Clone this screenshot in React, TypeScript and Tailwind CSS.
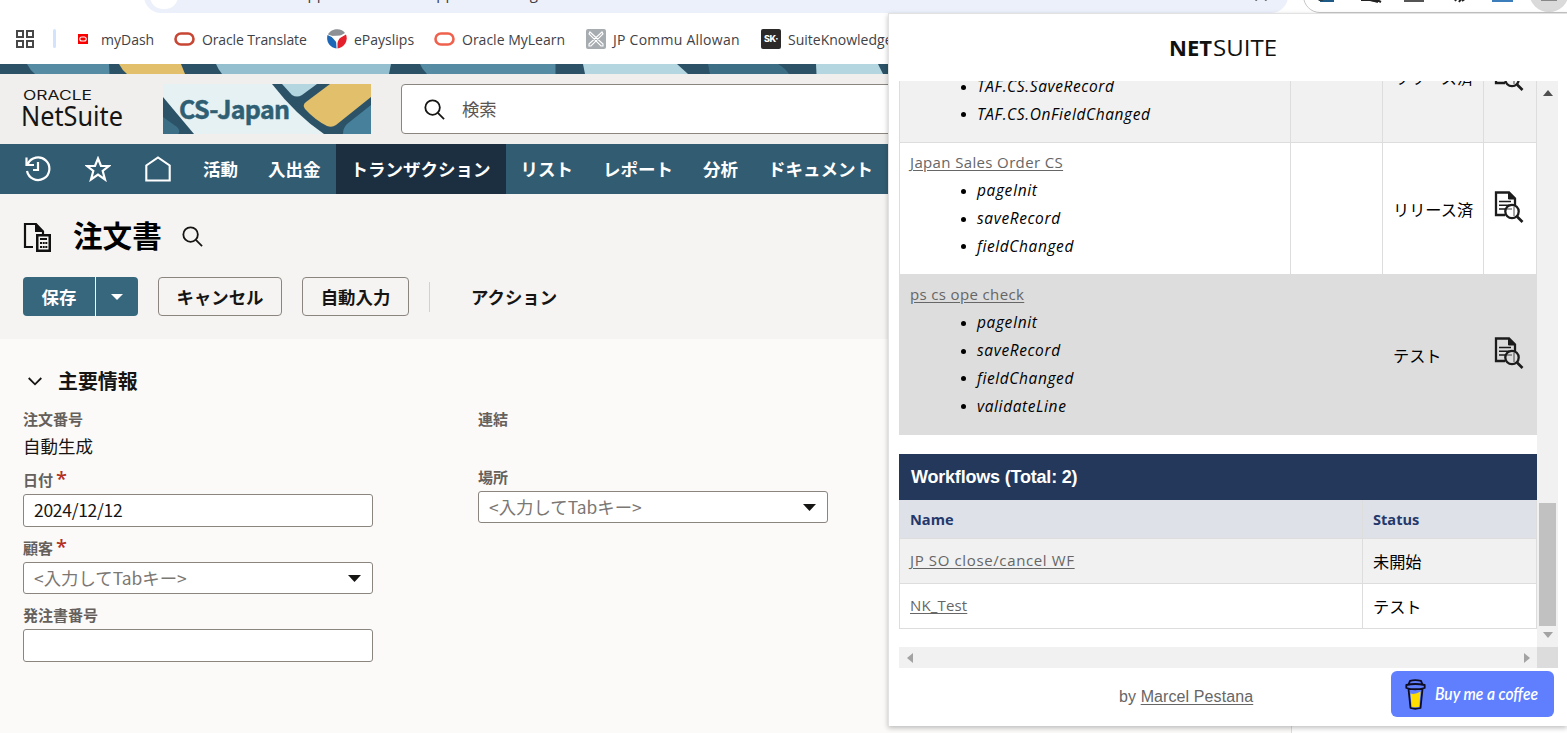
import React from "react";

interface Bookmark {
  label: string;
  icon: React.ReactNode;
  className: string;
}

interface ScriptRow {
  name: string;
  events: string[];
  status: string;
  className: string;
}

const OracleRing = ({ color }: { color: string }) => (
  <svg width="21" height="14" viewBox="0 0 21 14" className="shrink-0">
    <rect x="1.5" y="1.5" width="18" height="11" rx="5.5" fill="none" stroke={color} strokeWidth="2.6" />
  </svg>
);

const bookmarks: Bookmark[] = [
  {
    label: "myDash",
    className: "ml-[22px] gap-[13px] w-[76px]",
    icon: (
      <svg width="10" height="10" viewBox="0 0 10 10" className="shrink-0">
        <rect width="10" height="10" fill="#f80000" />
        <rect x="1.8" y="3" width="6.4" height="4" rx="2" fill="none" stroke="#fff" strokeWidth="1.1" />
      </svg>
    ),
  },
  {
    label: "Oracle Translate",
    className: "ml-[20px] gap-[7px] w-[133px] tracking-[-0.13px]",
    icon: <OracleRing color="#c74634" />,
  },
  {
    label: "ePayslips",
    className: "ml-[20px] gap-[7px] w-[87px]",
    icon: (
      <svg width="20" height="20" viewBox="0 0 20 20" className="shrink-0">
        <path d="M1 5.500C4 -1 15 -1.500 18 4L10 8.500Z" fill="#8d9094" />
        <path d="M0.500 6L9 10L9.500 19.500C2 18.500 -1 12 0.500 6Z" fill="#1c66b8" />
        <path d="M19 5.500C21.500 12 17 18.500 10.500 19.500V10.500Z" fill="#e3202b" />
        <path d="M4 7L14 6.500L10 14Z" fill="#fff" />
      </svg>
    ),
  },
  {
    label: "Oracle MyLearn",
    className: "ml-[20px] gap-[7px] w-[132px]",
    icon: <OracleRing color="#f0614d" />,
  },
  {
    label: "JP Commu Allowan",
    className: "ml-[20px] gap-[7px] w-[155px] tracking-[0.25px]",
    icon: (
      <svg width="20" height="20" viewBox="0 0 20 20" className="shrink-0">
        <rect width="20" height="20" rx="2" fill="#a7acb0" />
        <path d="M4 3L17 15V17H15L3 5ZM16 3L3 15V17H5L17 5Z" fill="none" stroke="#fff" strokeWidth="1.1" />
      </svg>
    ),
  },
  {
    label: "SuiteKnowledge",
    className: "ml-[20px] gap-[7px] w-[140px]",
    icon: (
      <span className="flex h-5 w-5 shrink-0 items-center justify-center rounded-[2px] bg-[#2b2a29] font-['Inter',sans-serif] text-[9px] font-extrabold tracking-[-0.4px] text-white">
        SK·
      </span>
    ),
  },
];

const navItems = ["活動", "入出金", "トランザクション", "リスト", "レポート", "分析", "ドキュメント"];

const scripts: ScriptRow[] = [
  {
    name: "TAF Localization CS",
    events: ["TAF.CS.PageInit", "TAF.CS.SaveRecord", "TAF.CS.OnFieldChanged"],
    status: "リリース済",
    className: "h-[132px] bg-[#f1f1f1]",
  },
  {
    name: "Japan Sales Order CS",
    events: ["pageInit", "saveRecord", "fieldChanged"],
    status: "リリース済",
    className: "h-[132px] bg-white",
  },
  {
    name: "ps cs ope check",
    events: ["pageInit", "saveRecord", "fieldChanged", "validateLine"],
    status: "テスト",
    className: "h-[160px] bg-[#dddddd]",
  },
];

const workflows = [
  { name: "JP SO close/cancel WF", status: "未開始", className: "bg-[#f1f1f1] tracking-[0.63px]" },
  { name: "NK_Test", status: "テスト", className: "bg-white tracking-[0.15px]" },
];

const SearchIcon = ({ size }: { size: number }) => (
  <svg width={size} height={size} viewBox="0 0 22 22" fill="none" stroke="#161513" strokeWidth="1.9">
    <circle cx="9" cy="9" r="7.6" />
    <path d="M14.5 14.5L21 21" />
  </svg>
);

const DocSearchIcon = () => (
  <svg width="30" height="32" viewBox="0 0 30 32" fill="none" stroke="#1c1c1c">
    <path d="M11 24H2V1.5H15L21 7.5V14" strokeWidth="2.3" />
    <path d="M14.5 1.5V8H21Z" fill="#1c1c1c" strokeWidth="1" />
    <path d="M5 10.5H17M5 14.2H15M5 18H12" strokeWidth="1.5" />
    <circle cx="18" cy="20.5" r="6.7" strokeWidth="2.3" />
    <path d="M12.5 18H18M20 16V25" strokeWidth="0.8" />
    <path d="M23 25.5L28.5 31" strokeWidth="2.6" />
  </svg>
);

const BrowserBar = () => (
  <div className="h-16 bg-white">
    <div className="flex h-[13px] items-end overflow-hidden">
      <div className="ml-[144px] flex h-[34px] w-[1144px] shrink-0 items-center rounded-full bg-[#ecf0fa]">
        <span className="ml-[6px] h-[26px] w-[28px] rounded-full bg-white" />
        <span className="relative top-[-3px] ml-[121px] whitespace-pre font-['Open_Sans',sans-serif] text-[15px] tracking-[0.1px] text-[#3c4043]">
          app.netsuite.com/app/accounting/transactions/
        </span>
        <svg width="14" height="14" viewBox="0 0 14 14" className="relative top-[-2px] ml-auto mr-[20px]">
          <path d="M1.5 13.5L7 10L12.5 13.5" stroke="#444" fill="none" strokeWidth="1.4" />
        </svg>
      </div>
      <div className="ml-[15px] flex h-[34px] w-[300px] shrink-0 items-end rounded-l-full border border-[#c6c6c6] pb-[9px] pl-[11px]">
        <svg width="260" height="34" viewBox="0 0 260 34" className="relative top-[9px] shrink-0">
          <circle cx="234" cy="14" r="20" fill="#dadada" />
          <path d="M5 18H19V24H5Z" fill="#1d5a86" />
          <path d="M0 18H8V23H4Z" fill="#2c3f4d" />
          <path d="M46 22H56L63 24M58 20L66 24" stroke="#222" strokeWidth="2" />
          <path d="M89 18H109V24H89Z" fill="#555" />
          <path d="M138 18L141 23M144 24L148 18M147 23L151 20" stroke="#222" strokeWidth="2" />
          <path d="M178 18V23H197V18" fill="#fff" stroke="#3c7dbb" strokeWidth="2" />
          <path d="M226 22H242" stroke="#888" strokeWidth="2" />
        </svg>
      </div>
    </div>
    <div className="flex h-[51px] items-center overflow-hidden whitespace-nowrap font-['Open_Sans',sans-serif] text-[14px] text-[#3f4246]">
      <svg width="18" height="18" viewBox="0 0 18 18" className="ml-4 shrink-0" fill="none" stroke="#474747" strokeWidth="2">
        <path d="M1 1H7V7H1ZM11 1H17V7H11ZM1 11H7V17H1ZM11 11H17V17H11Z" />
      </svg>
      <span className="ml-[19px] h-[19px] w-[3px] shrink-0 rounded bg-[#d3e3fd]" />
      {bookmarks.map((b) => (
        <div key={b.label} className={`flex shrink-0 items-center ${b.className}`}>
          {b.icon}
          <span className="pt-[2px]">{b.label}</span>
        </div>
      ))}
    </div>
  </div>
);

const BannerStrip = () => (
  <svg width="1567" height="10" viewBox="0 0 1567 10" className="block">
    <rect width="1567" height="10" fill="#2b5266" />
    <path d="M27 0H109L109.500 10H35Q30 6 27 0Z" fill="#558ca3" />
    <path d="M119 0H181L185 10H127Q122 6 119 0Z" fill="#e2bf6b" />
    <path d="M216 0H391L389 10H222Q218 5 216 0Z" fill="#94bfcf" />
    <path d="M420 0H555.500V10H427Q422 5 420 0Z" fill="#558ca3" />
    <path d="M583 0H677L688 10H585Z" fill="#b4d6e1" />
    <path d="M708 0H778Q785 4 789 10H710Z" fill="#3c6f86" />
    <path d="M816 0H878L883 10H816.500Z" fill="#b4d6e1" />
  </svg>
);

const Header = () => (
  <div className="flex h-[70px] items-center bg-[#f0efed]">
    <svg width="101" height="42" viewBox="0 0 101 42" className="ml-[22px]" fill="#161513">
      <text x="1" y="12" fontFamily="Inter, sans-serif" fontSize="12.5" textLength="69" lengthAdjust="spacingAndGlyphs">
        ORACLE
      </text>
      <text x="-1" y="38" fontFamily="Noto Sans, sans-serif" fontSize="28" textLength="102" lengthAdjust="spacingAndGlyphs">
        NetSuite
      </text>
    </svg>
    <svg width="208" height="50" viewBox="0 0 208 50" className="ml-10">
      <rect width="208" height="50" fill="#e6f1f4" />
      <path d="M0 13L31 50H0Z" fill="#2b5266" />
      <path d="M0 33L14 43Q17 46 16 49L15 50H0Z" fill="#3c6f86" />
      <path d="M109 0H208V50H161Q133 31 109 0Z" fill="#2b5266" />
      <path d="M119 0H154L139 11Q134 14 129 11Z" fill="#b4d6e1" />
      <path d="M167 0H208V13L173 41Q169 44 164 42Q152 36 142 25Q139 21 143 18Z" fill="#e2bf6b" />
      <path d="M208 21L184 40Q180 44 180 50H208Z" fill="#47809a" />
      <text
        x="16"
        y="35"
        fill="#2f5f73"
        stroke="#2f5f73"
        strokeWidth="0.5"
        fontFamily="Noto Sans CJK JP, sans-serif"
        fontWeight="700"
        fontSize="25"
        textLength="111"
      >
        CS-Japan
      </text>
    </svg>
    <div className="ml-[30px] flex h-[50px] w-[900px] items-center rounded border border-[#8b8580] bg-white pl-[22px]">
      <SearchIcon size={21} />
      <span className="ml-[17px] text-[17.3px] text-[#5b5652]">検索</span>
    </div>
  </div>
);

const NavBar = () => (
  <nav className="flex h-[50px] items-center bg-[#325c72] text-[17.5px] font-bold text-white">
    <svg width="26" height="26" viewBox="0 0 26 26" className="ml-[25px]" fill="none" stroke="#fff" strokeWidth="2.2">
      <path d="M2.800 8A11.300 11.300 0 1 1 2 15M1.500 1.500V9H9M13 6V14H8" />
    </svg>
    <svg width="26" height="26" viewBox="0 0 26 26" className="ml-[34px]" fill="none" stroke="#fff" strokeWidth="2.2">
      <path d="M13 2.500L16 10H24L17.700 15L20 23.500L13 18.500L6 23.500L8.300 15L2 10H10Z" />
    </svg>
    <svg width="26" height="26" viewBox="0 0 26 26" className="ml-[34px] mr-[17px]" fill="none" stroke="#fff" strokeWidth="2.100">
      <path d="M1.300 24.500V9.500L13 1.500L24.700 9.500V24.500Z" />
    </svg>
    {navItems.map((item) => (
      <div
        key={item}
        className={`flex h-full shrink-0 items-center px-[15px] ${item === "トランザクション" ? "bg-[#1c2f40]" : ""}`}
      >
        {item}
      </div>
    ))}
  </nav>
);

const TitleArea = () => (
  <div className="h-[145px] bg-[#f5f4f2] px-[23px] pt-[21px]">
    <div className="flex h-[42px] items-center">
      <svg width="28" height="30" viewBox="0 0 28 30" className="mt-[2px]">
        <path d="M10 25H2V2H13L20 9.500V12" fill="none" stroke="#111" strokeWidth="2.200" />
        <path d="M12 1V10H21" fill="#111" />
        <path d="M13 12H28V30H13Z" fill="#111" />
        <path d="M15.500 14.500H25.500V27.500H15.500Z" fill="#f5f4f2" />
        <path d="M17 16H24V18H17ZM17 20H19V22H17ZM19.700 20H21.700V22H19.700ZM22.300 20H24.300V22H22.300ZM17 24H19V26H17ZM19.700 24H21.700V26H19.700ZM22.300 24H24.300V26H22.300Z" fill="#111" />
      </svg>
      <h1 className="mb-[3px] ml-[22px] text-[29.6px] font-bold leading-[42px] text-black">注文書</h1>
      <span className="ml-5">
        <SearchIcon size={21} />
      </span>
    </div>
    <div className="mt-[20px] flex h-[39px] text-[17.4px] font-bold text-[#161513]">
      <button className="w-[72px] rounded-l bg-[#36677d] pt-[2px] text-white">保存</button>
      <button className="ml-px flex w-[42px] items-center justify-center rounded-r bg-[#36677d]">
        <svg width="12" height="6" viewBox="0 0 12 6">
          <path d="M0 0H12L6 6Z" fill="#fff" />
        </svg>
      </button>
      <button className="ml-5 w-[124px] rounded border border-[#8b8580] pt-[2px]">キャンセル</button>
      <button className="ml-5 w-[107px] rounded border border-[#8b8580] pt-[2px]">自動入力</button>
      <span className="ml-5 mt-[5px] h-[30px] w-px bg-[#d4d1cd]" />
      <button className="ml-[41px] pt-[2px]">アクション</button>
    </div>
  </div>
);

const Label = ({ text, required }: { text: string; required?: boolean }) => (
  <div className="flex h-[22px] items-center text-[15px] font-bold text-[#65605b]">
    {text}
    {required && (
      <span className="relative top-[-1px] ml-[3px] font-['Open_Sans',sans-serif] text-[20px] font-semibold leading-[22px] text-[#b3311f]">
        *
      </span>
    )}
  </div>
);

const SelectBox = () => (
  <div className="flex h-8 w-[350px] items-center justify-between rounded-[3px] border border-[#8b8580] bg-white pl-2.5 pr-[11px] text-[17.4px] text-[#7b7773]">
    <span>{"<入力してTabキー>"}</span>
    <svg width="13" height="7" viewBox="0 0 13 7">
      <path d="M0 0H13L6.500 7Z" fill="#161513" />
    </svg>
  </div>
);

const FormArea = () => (
  <div className="h-[394px] bg-[#fbfaf9] px-[23px] pt-[28px]">
    <div className="flex h-[28px] items-center">
      <svg width="14" height="9" viewBox="0 0 14 9" className="ml-[5px] mt-px" fill="none" stroke="#161513" strokeWidth="1.800">
        <path d="M0.700 1L7 7.300L13.300 1" />
      </svg>
      <h2 className="ml-[16px] text-[19.9px] font-bold leading-[28px] text-[#161513]">主要情報</h2>
    </div>
    <div className="flex gap-[105px]">
      <div className="w-[350px] pt-[13px]">
        <Label text="注文番号" />
        <div className="mt-[3px] h-[26px] text-[17.5px] leading-[26px] text-[#161513]">自動生成</div>
        <div className="mt-[10px]">
          <Label text="日付" required />
        </div>
        <div className="mt-[3px] flex h-[33px] items-center rounded-[3px] border border-[#8b8580] bg-white pl-2.5 text-[17.5px] tracking-[-0.3px] text-[#161513]">
          2024/12/12
        </div>
        <div className="mt-[10px] mb-[3px]">
          <Label text="顧客" required />
        </div>
        <SelectBox />
        <div className="mt-[10px] mb-[3px]">
          <Label text="発注書番号" />
        </div>
        <div className="h-[33px] rounded-[3px] border border-[#8b8580] bg-white" />
      </div>
      <div className="w-[350px] pt-[13px]">
        <Label text="連結" />
        <div className="mt-[36px] mb-[3px]">
          <Label text="場所" />
        </div>
        <SelectBox />
      </div>
    </div>
  </div>
);

const ScriptTableRow = ({ row }: { row: ScriptRow }) => (
  <div className={`grid shrink-0 grid-cols-[391px_92px_101px_54px] border-b border-[#dddddd] ${row.className}`}>
    <div className="border-l border-[#dddddd] pl-2.5 pt-[6px] leading-[27.9px]">
      <a className="tracking-[0.36px] text-[#666666] underline underline-offset-2">{row.name}</a>
      <ul className="list-none pl-[51px] pt-[0.3px] text-[15.5px] italic tracking-[0.6px] text-black">
        {row.events.map((event) => (
          <li key={event} className="flex items-center">
            <span className="mr-[11px] h-[5px] w-[5px] rounded-full bg-black" />
            {event}
          </li>
        ))}
      </ul>
    </div>
    <div className="border-l border-[#dddddd]" />
    <div className="flex items-center border-l border-[#dddddd] pl-2.5 pt-[2px] font-['Noto_Sans_CJK_JP',sans-serif] text-[16.2px] text-black">
      {row.status}
    </div>
    <div className="flex items-center border-x border-[#dddddd] pb-[4px] pl-[10px]">
      <DocSearchIcon />
    </div>
  </div>
);

const ScriptPanel = () => (
  <div className="absolute left-[888px] top-[13px] flex h-[713px] w-[679px] flex-col border-l border-t border-[#e2e2e2] bg-white shadow-[0_2px_5px_rgba(0,0,0,0.25)]">
    <div className="flex h-[67px] pl-[280px] pt-[25px]">
      <svg width="108" height="18" viewBox="0 0 108 18" fontFamily="Open Sans, sans-serif" fontSize="21" fill="#111">
        <text x="0" y="17" fontWeight="700" textLength="43" lengthAdjust="spacingAndGlyphs">
          NET
        </text>
        <text x="44" y="17" textLength="64" lengthAdjust="spacingAndGlyphs">
          SUITE
        </text>
      </svg>
    </div>
    <div className="ml-[10px] flex h-[566px] w-[659px]">
      <div className="flex w-[638px] flex-col justify-end overflow-hidden pb-[18px] font-['Open_Sans',sans-serif] text-[15px]">
        {scripts.map((row) => (
          <ScriptTableRow key={row.name} row={row} />
        ))}
        <div className="mt-[19px] flex h-[46px] shrink-0 items-center bg-[#24385b] pl-3 font-['Liberation_Sans',sans-serif] text-[18px] font-bold tracking-[-0.2px] text-white">
          Workflows (Total: 2)
        </div>
        <div className="grid h-[39px] shrink-0 grid-cols-[463px_175px] border-b border-[#dddddd] bg-[#dee1e8] text-[14.6px] font-bold text-[#24386b]">
          <div className="flex items-center border-l border-[#dddddd] pl-2.5 pt-[2px]">Name</div>
          <div className="flex items-center border-x border-[#dddddd] pl-2.5 pt-[2px]">Status</div>
        </div>
        {workflows.map((flow) => (
          <div
            key={flow.name}
            className={`grid h-[45px] shrink-0 grid-cols-[463px_175px] border-b border-[#dddddd] ${flow.className}`}
          >
            <div className="flex items-center border-l border-[#dddddd] pb-[2px] pl-2.5">
              <a className="text-[#666666] underline underline-offset-2">{flow.name}</a>
            </div>
            <div className="flex items-center border-x border-[#dddddd] pl-2.5 font-['Noto_Sans_CJK_JP',sans-serif] text-[16.2px] tracking-normal text-black">
              {flow.status}
            </div>
          </div>
        ))}
      </div>
      <div className="flex w-[21px] flex-col items-center bg-[#f1f1f1]">
        <svg width="10" height="6" viewBox="0 0 10 6" className="mt-[9px]">
          <path d="M0 6L5 0L10 6Z" fill="#505050" />
        </svg>
        <div className="mt-auto h-[123px] w-[17px] bg-[#c1c1c1]" />
        <svg width="10" height="6" viewBox="0 0 10 6" className="mt-[6px] mb-[9px]">
          <path d="M0 0H10L5 6Z" fill="#a3a3a3" />
        </svg>
      </div>
    </div>
    <div className="ml-[10px] flex h-[21px] w-[659px] items-center bg-[#f1f1f1]">
      <svg width="6" height="10" viewBox="0 0 6 10" className="ml-[8px]">
        <path d="M6 0L0 5L6 10Z" fill="#a3a3a3" />
      </svg>
      <svg width="6" height="10" viewBox="0 0 6 10" className="ml-auto mr-[7px]">
        <path d="M0 0L6 5L0 10Z" fill="#a3a3a3" />
      </svg>
      <div className="h-[21px] w-[21px] bg-[#dcdcdc]" />
    </div>
    <div className="flex h-[57px] font-['Liberation_Sans',sans-serif] text-[16px] text-[#666666]">
      <div className="ml-[230px] mt-[17px] w-[272px] tracking-[0.1px]">
        by <a className="underline underline-offset-2">Marcel Pestana</a>
      </div>
      <div className="mt-[3px] flex h-[46px] w-[163px] items-center rounded-md bg-[#5f7fff] pl-[14px]">
        <svg width="21" height="31" viewBox="0 0 21 31" stroke="#0d0c22" strokeWidth="1.800" strokeLinejoin="round">
          <path d="M3.500 10H17.500L15.500 29Q10 30.500 5.500 29Z" fill="#5f7fff" />
          <path d="M5.500 14.500Q10 16 15.500 12.500L14.300 27.700Q10 28.600 6.600 27.700Z" fill="#ffdd00" stroke="none" />
          <path d="M3.500 5.500L5 1.800Q10 0.500 16 1.800L17.500 5.500" fill="#5f7fff" />
          <path d="M1.300 6Q10 4 19.700 6V9Q10 11.500 1.300 9Z" fill="#5f7fff" />
        </svg>
        <svg width="106" height="30" viewBox="0 0 106 30" className="ml-2">
          <text
            x="1"
            y="21"
            fill="#fff"
            fontFamily="Lato, cursive"
            fontStyle="italic"
            fontWeight="600"
            fontSize="17"
            textLength="103"
            lengthAdjust="spacingAndGlyphs"
          >
            Buy me a coffee
          </text>
        </svg>
      </div>
    </div>
  </div>
);

const App: React.FC = () => {
  return (
    <div className="relative h-[733px] w-[1567px] overflow-hidden bg-[#fbfaf9] font-['Noto_Sans_CJK_JP',sans-serif]">
      <BrowserBar />
      <BannerStrip />
      <Header />
      <NavBar />
      <TitleArea />
      <FormArea />
      <div className="absolute bottom-0 left-[1291px] h-[10px] w-[276px] border-l border-[#dddddd] bg-white" />
      <ScriptPanel />
    </div>
  );
};

export default App;
